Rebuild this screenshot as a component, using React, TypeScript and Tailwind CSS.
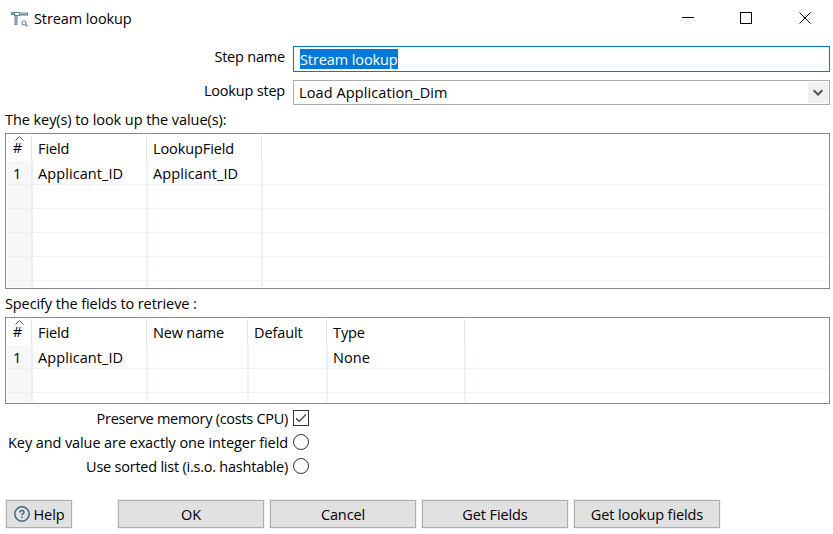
import React from "react";

type Column = { title: string; width: string };

const keyColumns: Column[] = [
  { title: "Field", width: "w-[115px]" },
  { title: "LookupField", width: "w-[115px]" },
];

const fieldColumns: Column[] = [
  { title: "Field", width: "w-[115px]" },
  { title: "New name", width: "w-[101px] tracking-[-0.2px]" },
  { title: "Default", width: "w-[79px]" },
  { title: "Type", width: "w-[138px]" },
];

function StepIcon() {
  return (
    <svg width="18" height="16" viewBox="0 0 18 16" fill="none">
      <path d="M0 1.5h4M8 2h9" stroke="#64849a" strokeWidth="3" />
      <path d="M1 1.5h2M9 1.5h7" stroke="#a9c0cf" strokeWidth="1" />
      <rect x="3.5" y="0.5" width="5" height="3" fill="#fff" stroke="#5f8199" />
      <path d="M5 4v9" stroke="#64849a" strokeWidth="3" />
      <path d="M5 4v8" stroke="#a9c0cf" />
      <circle cx="13" cy="11" r="2" stroke="#7793a6" strokeWidth="1.2" />
      <path d="M14.5 12.5l2 2" stroke="#7793a6" strokeWidth="1.2" />
    </svg>
  );
}

function Grid({ columns, rows, height }: { columns: Column[]; rows: string[][]; height: string }) {
  return (
    <div className={`${height} w-[825px] overflow-hidden border border-[#828790] p-px`}>
      <div className="flex h-full flex-col overflow-hidden">
        <div className="flex h-[26px] shrink-0">
          <div className="flex w-[25px] shrink-0 flex-col items-center border-r border-[#e5e5e5] pt-px">
            <svg className="ml-[1px]" width="9" height="5" viewBox="0 0 9 5" fill="none">
              <path d="M0.5 4.5l4-4 4 4" stroke="#555" />
            </svg>
            <span className="-mt-[1px] mr-[3px] leading-[16px]">#</span>
          </div>
          {columns.map((c, i) => (
            <div key={i} className={`${c.width} shrink-0 border-r border-[#e5e5e5] pl-[6px] pt-[4px] leading-[20px]`}>
              {c.title}
            </div>
          ))}
        </div>
        {rows.map((row, r) => (
          <div key={r} className="flex h-6 shrink-0">
            <div className="w-[26px] shrink-0 border-r-2 border-[#e9eef6] bg-[#f7f7f7]">
              <div className="h-full border-b border-[#f0f0f0] pl-[6px] leading-[26px]">{r === 0 ? "1" : ""}</div>
            </div>
            {columns.map((c, i) => (
              <div key={i} className={`${c.width} shrink-0 border-r-2 border-[#ecf1fa]`}>
                <div className="h-full border-b border-[#f0f0f0] pl-[5px] leading-[26px] tracking-[0.08px]">
                  {row[i] ?? ""}
                </div>
              </div>
            ))}
            <div className="flex-1 border-b border-[#f0f0f0]" />
          </div>
        ))}
      </div>
    </div>
  );
}

function Button({ children, width }: { children: React.ReactNode; width: string }) {
  return (
    <button
      className={`${width} flex h-7 items-center justify-center border border-[#adadad] bg-[#e1e1e1] shadow-[0_0_0_1px_#f0f0f0]`}
    >
      {children}
    </button>
  );
}

export default function App() {
  return (
    <div className="h-[534px] w-[833px] overflow-hidden bg-white font-['Open_Sans','Noto_Sans',sans-serif] text-[14.5px] tracking-[-0.1px] text-black">
      <header className="flex h-[46px] items-start pl-[11px]">
        <div className="pt-[12px]">
          <StepIcon />
        </div>
        <span className="ml-[5px] mt-[9px] leading-[20px]">Stream lookup</span>
        <svg className="ml-auto mr-[21px] mt-[11px]" width="130" height="14" viewBox="0 0 130 14" fill="none" stroke="#000">
          <path d="M0 6.5h12" />
          <rect x="58.5" y="1.5" width="11" height="11" />
          <path d="M117.5 1.5l11 11M128.5 1.5l-11 11" />
        </svg>
      </header>

      <div className="flex h-[34px] items-start">
        <label className="w-[285px] text-right leading-[22px] tracking-[-0.2px]">Step name</label>
        <div className="ml-2 h-[26px] w-[537px] border border-[#0078d7] pl-[6px] pt-[2px]">
          <span className="block h-5 w-[98px] whitespace-nowrap bg-[#0078d7] leading-[21px] text-white">Stream lookup</span>
        </div>
      </div>
      <div className="flex h-[30px] items-start">
        <label className="w-[285px] text-right leading-[22px] tracking-[-0.2px]">Lookup step</label>
        <div className="ml-2 flex h-[25px] w-[537px] justify-between border border-[#adadad] p-px pl-[5px]">
          <span className="leading-[22px] tracking-[0.1px]">Load Application_Dim</span>
          <div className="flex w-5 items-center justify-center bg-[#f0f0f0]">
            <svg width="10" height="8" viewBox="0 0 10 8" fill="none">
              <path d="M0.7 1.2L5 5.5l4.3-4.3" stroke="#555" strokeWidth="2" />
            </svg>
          </div>
        </div>
      </div>

      <div className="pl-[5px]">
        <div className="h-[23px] leading-[20px] tracking-[-0.07px]">The key(s) to look up the value(s):</div>
        <Grid height="h-[156px]" columns={keyColumns} rows={[["Applicant_ID", "Applicant_ID"], [], [], [], [], []]} />
        <div className="h-[28px] pt-[5px] leading-[20px]">Specify the fields to retrieve :</div>
        <Grid height="h-[87px]" columns={fieldColumns} rows={[["Applicant_ID", "", "", "None"], [], []]} />
      </div>

      <div className="pt-[2px]">
        <div className="flex h-6 items-center">
          <label className="w-[288px] pt-[2px] text-right leading-[22px] tracking-[-0.28px]">Preserve memory (costs CPU)</label>
          <svg className="ml-[5px]" width="16" height="16" viewBox="0 0 16 16" fill="none" stroke="#333">
            <rect x="0.5" y="0.5" width="15" height="15" />
            <path d="M3 8.2l3.2 3.2L13 4.4" strokeWidth="1.3" />
          </svg>
        </div>
        <div className="flex h-6 items-center">
          <label className="w-[288px] whitespace-nowrap pt-[2px] text-right leading-[22px]">
            Key and value are exactly one integer field
          </label>
          <div className="ml-[5px] size-4 rounded-full border border-[#333]" />
        </div>
        <div className="flex h-6 items-center">
          <label className="w-[288px] pt-[2px] text-right leading-[22px] tracking-[-0.23px]">
            Use sorted list (i.s.o. hashtable)
          </label>
          <div className="ml-[5px] size-4 rounded-full border border-[#333]" />
        </div>
      </div>

      <div className="mt-[22px] flex pl-[6px]">
        <Button width="w-[66px]">
          <svg className="mr-1" width="16" height="16" viewBox="0 0 16 16" fill="none" stroke="#3d6480">
            <circle cx="8" cy="8" r="7.2" strokeWidth="1.5" />
            <path d="M6 6.4c0-2.6 4-2.6 4-0.2C10 7.8 8 7.6 8 9.3M8 10.5v1.5" strokeWidth="1.5" />
          </svg>
          <span className="pt-[2px] leading-[22px]">Help</span>
        </Button>
        <div className="ml-[46px] flex gap-[6px] leading-[22px]">
          <Button width="w-[146px] pt-[2px]">OK</Button>
          <Button width="w-[146px] pt-[2px]">Cancel</Button>
          <Button width="w-[146px] pt-[2px]">Get Fields</Button>
          <Button width="w-[146px] pt-[2px]">Get lookup fields</Button>
        </div>
      </div>
    </div>
  );
}
